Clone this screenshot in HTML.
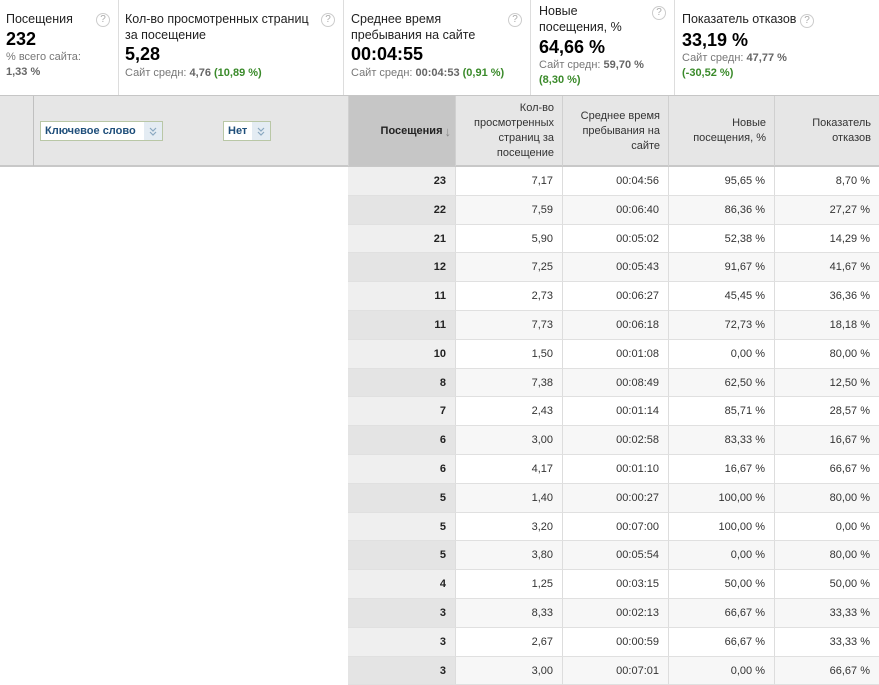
<!DOCTYPE html>
<html><head><meta charset="utf-8"><style>
*{margin:0;padding:0;box-sizing:border-box}
body{width:879px;height:678px;overflow:hidden;background:#fff;font-family:"Liberation Sans","DejaVu Sans",sans-serif;color:#000;position:relative}
.a{position:absolute;white-space:nowrap}
.lbl{font-size:12.5px;color:#222;line-height:16px}
.big{font-size:18px;font-weight:bold;line-height:20px}
.sub{font-size:11px;color:#777;line-height:15px}
.sub b{color:#666}
.g{color:#3a8a2a;font-weight:bold}
.q{position:absolute;width:14px;height:14px;border:1px solid #ccc;border-radius:50%;font-size:10px;color:#aaa;text-align:center;line-height:12px}
.vl{position:absolute;top:0;width:1px;height:95px;background:#ddd}
.hdr{position:absolute;top:95px;left:0;width:879px;height:72px;background:#e6e6e6;border-top:1px solid #c6c6c6;border-bottom:2px solid #c8c8c8}
.hc{position:absolute;top:0;height:70px;border-left:1px solid #d0d0d0;font-size:11px;color:#333;text-align:right;padding-right:8px;display:flex;align-items:center;justify-content:flex-end;line-height:15px}
.dd{position:absolute;top:121px;height:20px;border:1px solid #b9c7a6;background:#fff;font-size:11px;font-weight:bold;color:#1e4e7a;line-height:18px;padding-left:4px}
.dd span{position:absolute;right:0;top:0;width:18px;height:18px;background:#e4ecf3}
.dd svg{position:absolute;left:5px;top:5px}
.row{position:absolute;left:348px;width:531px;height:28.8px;font-size:11px;color:#333}
.row div{position:absolute;top:0;height:100%;text-align:right;padding-right:9px;line-height:28px;border-left:1px solid #ddd;border-bottom:1px solid #e0e0e0}
</style></head><body>
<div class="vl" style="left:118px"></div><div class="vl" style="left:343px"></div><div class="vl" style="left:530px"></div><div class="vl" style="left:674px"></div>

<div class="a lbl" style="left:6px;top:11px">Посещения</div>
<div class="a big" style="left:6px;top:29px">232</div>
<div class="a sub" style="left:6px;top:50px">% всего сайта:</div>
<div class="a sub" style="left:6px;top:65px"><b>1,33 %</b></div>
<div class="q" style="left:96px;top:13px">?</div>

<div class="a lbl" style="left:125px;top:11px">Кол-во просмотренных страниц</div>
<div class="a lbl" style="left:125px;top:27px">за посещение</div>
<div class="a big" style="left:125px;top:44px">5,28</div>
<div class="a sub" style="left:125px;top:66px">Сайт средн: <b>4,76</b> <span class="g">(10,89 %)</span></div>
<div class="q" style="left:321px;top:13px">?</div>

<div class="a lbl" style="left:351px;top:11px">Среднее время</div>
<div class="a lbl" style="left:351px;top:27px">пребывания на сайте</div>
<div class="a big" style="left:351px;top:44px">00:04:55</div>
<div class="a sub" style="left:351px;top:66px">Сайт средн: <b>00:04:53</b> <span class="g">(0,91 %)</span></div>
<div class="q" style="left:508px;top:13px">?</div>

<div class="a lbl" style="left:539px;top:3px">Новые</div>
<div class="a lbl" style="left:539px;top:19px">посещения, %</div>
<div class="a big" style="left:539px;top:37px">64,66 %</div>
<div class="a sub" style="left:539px;top:58px">Сайт средн: <b>59,70 %</b></div>
<div class="a sub" style="left:539px;top:73px"><span class="g">(8,30 %)</span></div>
<div class="q" style="left:652px;top:6px">?</div>

<div class="a lbl" style="left:682px;top:11px">Показатель отказов</div>
<div class="a big" style="left:682px;top:30px">33,19 %</div>
<div class="a sub" style="left:682px;top:51px">Сайт средн: <b>47,77 %</b></div>
<div class="a sub" style="left:682px;top:66px"><span class="g">(-30,52 %)</span></div>
<div class="q" style="left:800px;top:14px">?</div>

<div class="hdr">
<div class="hc" style="left:33px;width:315px;border-left:1px solid #c0c0c0"></div>
<div class="hc" style="left:348px;width:107px;background:#c6c6c6;font-weight:bold;color:#222;padding-right:4px">Посещения <span style="color:#888;font-size:13px;margin-left:2px">↓</span></div>
<div class="hc" style="left:455px;width:107px">Кол-во<br>просмотренных<br>страниц за<br>посещение</div>
<div class="hc" style="left:562px;width:106px">Среднее время<br>пребывания на<br>сайте</div>
<div class="hc" style="left:668px;width:106px">Новые<br>посещения, %</div>
<div class="hc" style="left:774px;width:105px">Показатель<br>отказов</div>
</div>
<div class="dd" style="left:40px;width:123px">Ключевое слово<span><svg width="8" height="9" viewBox="0 0 8 9"><path d="M1 1L4 4L7 1M1 5L4 8L7 5" fill="none" stroke="#8aa8c0" stroke-width="1.2"/></svg></span></div>
<div class="dd" style="left:223px;width:48px">Нет<span><svg width="8" height="9" viewBox="0 0 8 9"><path d="M1 1L4 4L7 1M1 5L4 8L7 5" fill="none" stroke="#8aa8c0" stroke-width="1.2"/></svg></span></div>

<div id="rows"></div>
<script>
var d=[[23,"7,17","00:04:56","95,65 %","8,70 %"],[22,"7,59","00:06:40","86,36 %","27,27 %"],[21,"5,90","00:05:02","52,38 %","14,29 %"],[12,"7,25","00:05:43","91,67 %","41,67 %"],[11,"2,73","00:06:27","45,45 %","36,36 %"],[11,"7,73","00:06:18","72,73 %","18,18 %"],[10,"1,50","00:01:08","0,00 %","80,00 %"],[8,"7,38","00:08:49","62,50 %","12,50 %"],[7,"2,43","00:01:14","85,71 %","28,57 %"],[6,"3,00","00:02:58","83,33 %","16,67 %"],[6,"4,17","00:01:10","16,67 %","66,67 %"],[5,"1,40","00:00:27","100,00 %","80,00 %"],[5,"3,20","00:07:00","100,00 %","0,00 %"],[5,"3,80","00:05:54","0,00 %","80,00 %"],[4,"1,25","00:03:15","50,00 %","50,00 %"],[3,"8,33","00:02:13","66,67 %","33,33 %"],[3,"2,67","00:00:59","66,67 %","33,33 %"],[3,"3,00","00:07:01","0,00 %","66,67 %"]];
var L=[[0,107],[107,107],[214,106],[320,106],[426,105]],h="";
d.forEach(function(r,i){var bg=i%2?"#f7f7f7":"#fff",vb=i%2?"#e4e4e4":"#efefef";h+='<div class="row" style="top:'+(167+i*28.8)+'px">';
r.forEach(function(v,j){h+='<div style="left:'+L[j][0]+'px;width:'+L[j][1]+'px;background:'+(j?bg:vb)+(j?'':';font-weight:bold;color:#222;border-left:none')+'">'+v+'</div>'});h+='</div>'});
document.getElementById("rows").innerHTML=h;
</script>
</body></html>
